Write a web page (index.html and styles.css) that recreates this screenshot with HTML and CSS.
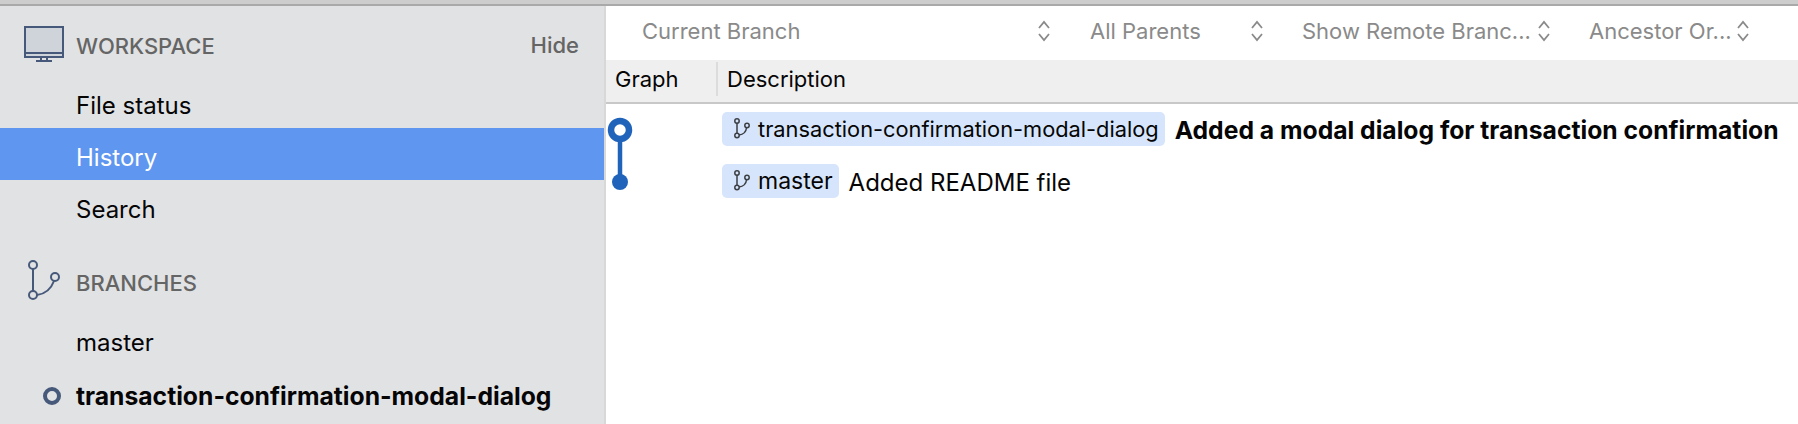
FILE: index.html
```html
<!DOCTYPE html>
<html lang="en">
<head>
    <meta charset="UTF-8">
    <meta name="viewport" content="width=device-width, initial-scale=1.0">
    <title>History</title>
    <link rel="stylesheet" href="styles.css">
</head>
<body>
    <div class="title-edge"></div>
    <div class="app">
        <aside class="sidebar">
            <div class="section-head workspace-head">
                <svg class="section-icon" width="53" height="38" viewBox="0 0 53 38">
                    <rect x="2" y="1" width="38" height="30" fill="#cfd3da" stroke="#47597a" stroke-width="2"/>
                    <path d="M2 27H40M18 32V35M24 32V35M13 35H29" fill="none" stroke="#47597a" stroke-width="2"/>
                </svg>
                <span class="section-title">WORKSPACE</span>
                <span class="hide-link">Hide</span>
            </div>
            <div class="nav-item">File status</div>
            <div class="nav-item active">History</div>
            <div class="nav-item">Search</div>

            <div class="section-head branches-head">
                <svg class="section-icon" width="53" height="44" viewBox="0 0 53 44">
                    <circle cx="10" cy="5" r="4" fill="none" stroke="#47597a" stroke-width="2"/>
                    <circle cx="10" cy="35" r="4" fill="none" stroke="#47597a" stroke-width="2"/>
                    <circle cx="32" cy="17" r="4" fill="none" stroke="#47597a" stroke-width="2"/>
                    <path d="M10 9V31M14 35C22 34 28 29 31 21" fill="none" stroke="#47597a" stroke-width="2"/>
                </svg>
                <span class="section-title">BRANCHES</span>
            </div>
            <div class="nav-item branch-item">master</div>
            <div class="nav-item branch-item current">
                <span class="current-dot"></span>
                transaction-confirmation-modal-dialog
            </div>
        </aside>

        <main class="main">
            <div class="toolbar">
                <div class="filter filter-branch">
                    <span class="filter-label">Current Branch</span>
                    <svg class="updown" width="14" height="24" viewBox="0 0 14 24"><path d="M2 9L7 3L12 9M2 15L7 21L12 15" fill="none" stroke="#8a8a8a" stroke-width="1.800"/></svg>
                </div>
                <div class="filter filter-parents">
                    <span class="filter-label">All Parents</span>
                    <svg class="updown" width="14" height="24" viewBox="0 0 14 24"><path d="M2 9L7 3L12 9M2 15L7 21L12 15" fill="none" stroke="#8a8a8a" stroke-width="1.800"/></svg>
                </div>
                <div class="filter filter-remote">
                    <span class="filter-label">Show Remote Branc...</span>
                    <svg class="updown" width="14" height="24" viewBox="0 0 14 24"><path d="M2 9L7 3L12 9M2 15L7 21L12 15" fill="none" stroke="#8a8a8a" stroke-width="1.800"/></svg>
                </div>
                <div class="filter filter-order">
                    <span class="filter-label">Ancestor Or...</span>
                    <svg class="updown" width="14" height="24" viewBox="0 0 14 24"><path d="M2 9L7 3L12 9M2 15L7 21L12 15" fill="none" stroke="#8a8a8a" stroke-width="1.800"/></svg>
                </div>
            </div>

            <div class="table-head">
                <div class="col-graph">Graph</div>
                <div class="col-desc">Description</div>
            </div>

            <div class="table-body">
                <svg class="graph" width="116" height="100" viewBox="0 0 116 100">
                    <path d="M14 26V78" stroke="#2063bb" stroke-width="4.500"/>
                    <circle cx="14" cy="26" r="9" fill="#fff" stroke="#2063bb" stroke-width="6.500"/>
                    <circle cx="14" cy="78" r="8" fill="#2063bb"/>
                </svg>
                <div class="commits">
                    <div class="commit">
                        <span class="chip">
                            <svg width="18" height="22" viewBox="0 0 18 22"><circle cx="4" cy="3" r="2.200" fill="none" stroke="#3c3f44" stroke-width="1.500"/><circle cx="4" cy="17.500" r="2.200" fill="none" stroke="#3c3f44" stroke-width="1.500"/><circle cx="14" cy="7.500" r="2.200" fill="none" stroke="#3c3f44" stroke-width="1.500"/><path d="M4 5V15M6 17C10 16.500 13 14 13.500 10" fill="none" stroke="#3c3f44" stroke-width="1.500"/></svg>
                            transaction-confirmation-modal-dialog
                        </span>
                        <span class="message bold">Added a modal dialog for transaction confirmation</span>
                    </div>
                    <div class="commit">
                        <span class="chip chip-short">
                            <svg width="18" height="22" viewBox="0 0 18 22"><circle cx="4" cy="3" r="2.200" fill="none" stroke="#3c3f44" stroke-width="1.500"/><circle cx="4" cy="17.500" r="2.200" fill="none" stroke="#3c3f44" stroke-width="1.500"/><circle cx="14" cy="7.500" r="2.200" fill="none" stroke="#3c3f44" stroke-width="1.500"/><path d="M4 5V15M6 17C10 16.500 13 14 13.500 10" fill="none" stroke="#3c3f44" stroke-width="1.500"/></svg>
                            master
                        </span>
                        <span class="message">Added README file</span>
                    </div>
                </div>
            </div>
        </main>
    </div>
</body>
</html>
```

FILE: styles.css
```css
html, body {
    margin: 0;
    padding: 0;
    height: 424px;
    overflow: hidden;
}

body {
    font-family: 'Inter', 'Liberation Sans', sans-serif;
    font-size: 24px;
    color: #050505;
    background-color: #fff;
}

.title-edge {
    height: 4px;
    background-color: #cdcdcd;
    border-bottom: 2px solid #a9a9a9;
}

.app {
    display: flex;
    height: 418px;
}

/* sidebar */
.sidebar {
    width: 604px;
    background-color: #e1e2e4;
    border-right: 2px solid #d8d8d8;
    flex-shrink: 0;
}

.section-head {
    display: flex;
    align-items: center;
    padding-left: 23px;
}

.workspace-head {
    height: 62px;
    padding-top: 8px;
}

.branches-head {
    height: 64px;
    margin-top: 18px;
}

.section-icon {
    flex-shrink: 0;
}

.section-title {
    font-size: 22px;
    font-weight: 500;
    color: #656565;
}

.workspace-head .section-title {
    margin-top: 2px;
}

.branches-head .section-title {
    margin-top: 2px;
}

.hide-link {
    margin-left: auto;
    margin-right: 25px;
    font-size: 22px;
    font-weight: 500;
    color: #656565;
}

.nav-item {
    height: 52px;
    line-height: 60px;
    padding-left: 76px;
    position: relative;
}

.nav-item.active {
    background-color: #5f96f0;
    color: #fff;
}

.branch-item {
    height: 54px;
    line-height: 57px;
}

.current {
    font-weight: 700;
    font-size: 24.700px;
}

.current-dot {
    position: absolute;
    left: 43px;
    top: 19px;
    width: 10px;
    height: 10px;
    border: 4px solid #47597a;
    border-radius: 50%;
}

/* right side */
.main {
    flex: 1;
    min-width: 0;
}

.toolbar {
    height: 49px;
    padding-bottom: 5px;
    display: flex;
    align-items: center;
    color: #8a8a8a;
    font-size: 22px;
}

.filter {
    display: flex;
    align-items: center;
    justify-content: space-between;
    height: 100%;
}

.filter-branch {
    width: 409px;
    margin-left: 36px;
}

.filter-parents {
    width: 174px;
    margin-left: 39px;
}

.filter-remote {
    width: 249px;
    margin-left: 38px;
}

.filter-order {
    width: 161px;
    margin-left: 38px;
}

.table-head {
    height: 38px;
    padding-bottom: 4px;
    display: flex;
    align-items: center;
    background-color: #efefef;
    border-bottom: 2px solid #c8c8c8;
    font-size: 22px;
}

.col-graph {
    width: 110px;
    padding-left: 9px;
    box-sizing: border-box;
}

.col-desc {
    height: 34px;
    line-height: 34px;
    padding-left: 9px;
    border-left: 2px solid #dcdcdc;
}

.table-body {
    display: flex;
}

.graph {
    flex-shrink: 0;
}

.commits {
    padding-top: 8px;
}

.commit {
    display: flex;
    align-items: center;
    height: 34px;
    margin-bottom: 18px;
}

.chip {
    display: flex;
    align-items: center;
    gap: 7px;
    height: 34px;
    padding: 0 6px 0 11px;
    background-color: #d6e5fb;
    border-radius: 5px;
    font-size: 21.800px;
    white-space: nowrap;
}

.chip-short {
    font-size: 23px;
}

.message {
    margin-left: 10px;
    margin-top: 2px;
    white-space: nowrap;
}

.bold {
    font-weight: 700;
    font-size: 24.700px;
}
```
